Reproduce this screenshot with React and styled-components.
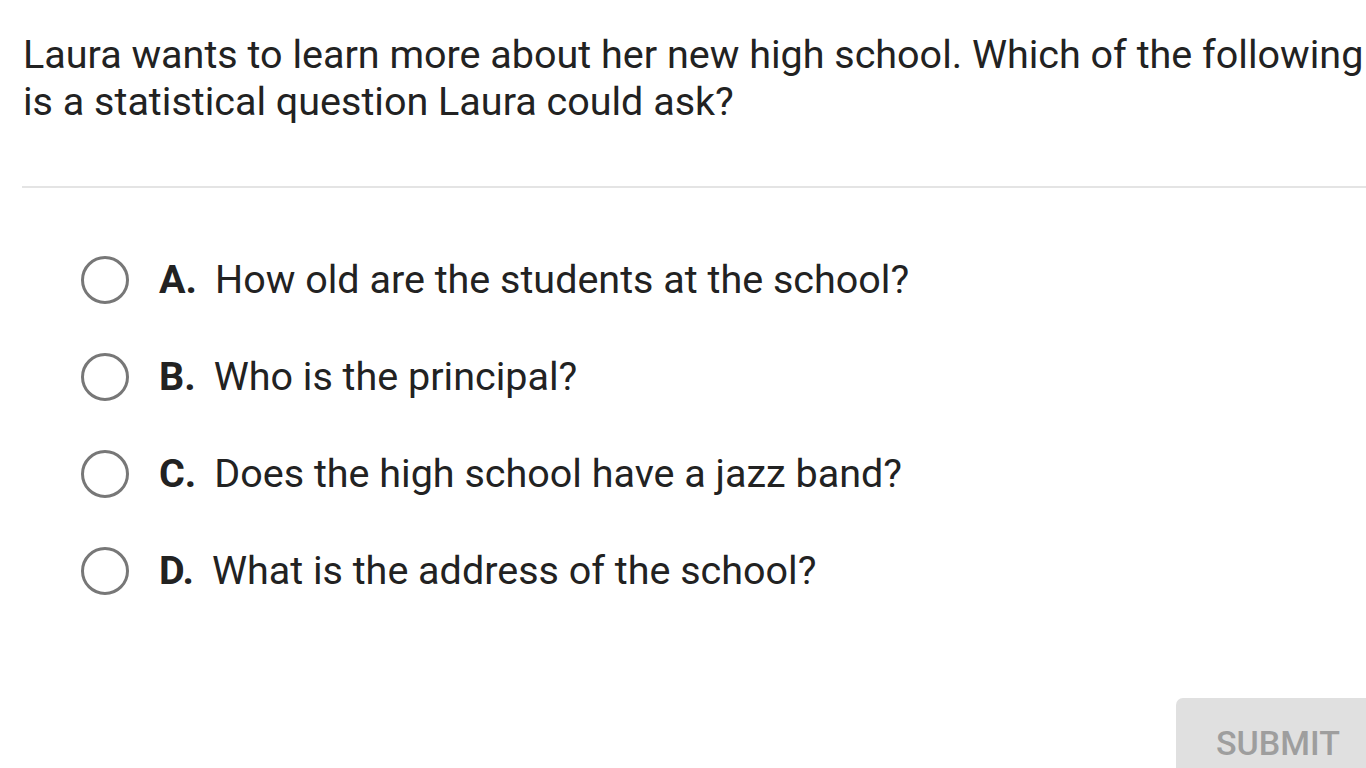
import React from 'react';
import styled, { createGlobalStyle } from 'styled-components';

const Global = createGlobalStyle`
  html, body {
    margin: 0;
    padding: 0;
    background: #ffffff;
    overflow: hidden;
  }
  body {
    font-family: Roboto, "Liberation Sans", sans-serif;
    color: #222222;
  }
`;

const Page = styled.div`
  width: 1366px;
  height: 768px;
  position: relative;
  overflow: hidden;
`;

const Question = styled.p`
  margin: 0;
  padding: 31px 0 0 23px;
  width: 1400px;
  font-size: 39.5px;
  line-height: 47px;
  color: #222222;
`;

const Divider = styled.hr`
  margin: 61px 0 0 22px;
  border: none;
  height: 2px;
  background: #e4e4e4;
`;

const Options = styled.div`
  display: flex;
  flex-direction: column;
  gap: 48px;
  padding: 67px 0 0 81px;
`;

const Option = styled.label`
  display: flex;
  align-items: center;
  height: 49px;
  cursor: pointer;
`;

const Radio = styled.span`
  width: 42px;
  height: 42px;
  border-radius: 50%;
  border: 3.5px solid #777777;
  flex-shrink: 0;
`;

const Letter = styled.span`
  font-weight: 700;
  font-size: 39.5px;
  margin-left: 30px;
  margin-right: 18px;
`;

const Text = styled.span`
  font-size: 39.5px;
`;

const Submit = styled.button`
  position: absolute;
  left: 1176px;
  top: 698px;
  width: 220px;
  height: 90px;
  border: none;
  border-radius: 7px 0 0 0;
  background: #e0e0e0;
  color: #9e9e9e;
  font-family: Roboto, "Liberation Sans", sans-serif;
  font-size: 34px;
  font-weight: 500;
  text-align: left;
  padding: 25px 0 0 40px;
  display: flex;
  align-items: flex-start;
`;

const options = [
  ['A.', 'How old are the students at the school?'],
  ['B.', 'Who is the principal?'],
  ['C.', 'Does the high school have a jazz band?'],
  ['D.', 'What is the address of the school?'],
];

export default function App() {
  return (
    <Page>
      <Global />
      <Question>
        Laura wants to learn more about her new high school. Which of the following
        <br />
        is a statistical question Laura could ask?
      </Question>
      <Divider />
      <Options>
        {options.map(([l, t]) => (
          <Option key={l}>
            <Radio />
            <Letter>{l}</Letter>
            <Text>{t}</Text>
          </Option>
        ))}
      </Options>
      <Submit>SUBMIT</Submit>
    </Page>
  );
}
